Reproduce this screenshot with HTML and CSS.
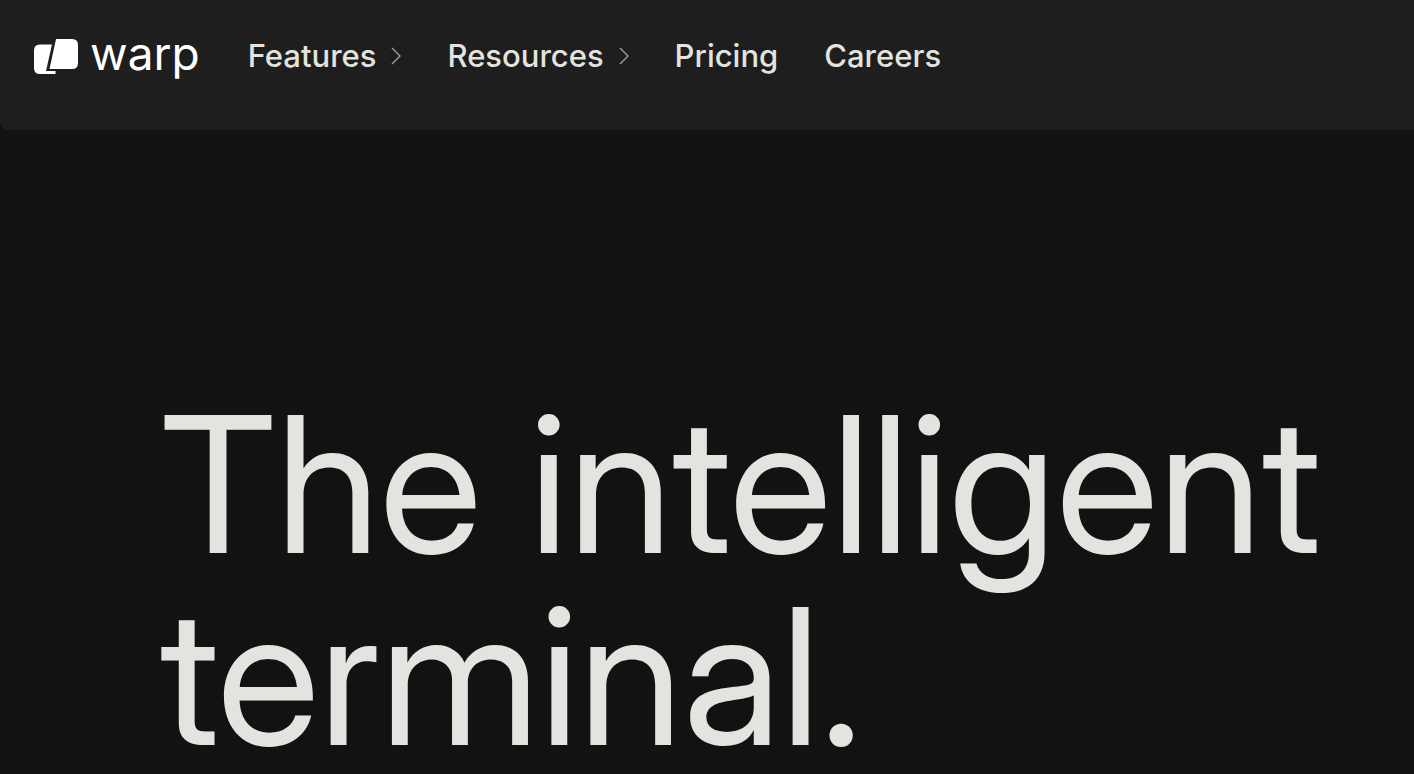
FILE: index.html
```html
<!DOCTYPE html>
<html lang="en">
<head>
<meta charset="utf-8">
<meta name="viewport" content="width=device-width, initial-scale=1">
<title>Warp: The intelligent terminal</title>
<link rel="stylesheet" href="styles.css">
</head>
<body>
<header class="header">
  <a class="logo" href="#">
    <svg class="logo-mark" viewBox="0 -1 44 36" aria-hidden="true">
      <path fill="#fff" d="M22 0H38Q44 0 44 6V24Q44 30 38 30H15.500Z"/>
      <path fill="#fff" d="M6 5.500H18L12 32H21.500V35H6Q0 35 0 29V11.500Q0 5.500 6 5.500Z"/>
    </svg>
    <span class="logo-name">warp</span>
  </a>
  <nav class="nav">
    <button class="nav-item" type="button">Features
      <svg class="chevron" viewBox="0 0 10 18" aria-hidden="true"><path d="M1 1L9 9L1 17"/></svg>
    </button>
    <button class="nav-item" type="button">Resources
      <svg class="chevron" viewBox="0 0 10 18" aria-hidden="true"><path d="M1 1L9 9L1 17"/></svg>
    </button>
    <a class="nav-item" href="#">Pricing</a>
    <a class="nav-item" href="#">Careers</a>
  </nav>
</header>
<main class="hero">
  <h1 class="title">The intelligent terminal.</h1>
</main>
</body>
</html>
```
FILE: styles.css
```css
* { box-sizing: border-box; }
body {
  margin: 0;
  background: #121212;
  color: #e3e4df;
  font-family: Inter, "Liberation Sans", sans-serif;
}
.header {
  display: flex;
  align-items: center;
  gap: 48px;
  padding: 32px 34px 50px;
  background: #1e1e1e;
  border-bottom-left-radius: 8px;
}
.logo {
  display: flex;
  align-items: center;
  gap: 12px;
  color: #fff;
  text-decoration: none;
}
.logo-mark { width: 44px; height: 36px; }
.logo-name { padding-bottom: 6px; font-size: 46px; line-height: 40px; }
.nav { display: flex; align-items: center; gap: 46px; }
.nav-item {
  display: flex;
  align-items: center;
  gap: 15px;
  padding: 0;
  border: 0;
  background: none;
  color: inherit;
  font: 500 31px/48px Inter, "Liberation Sans", sans-serif;
  text-decoration: none;
}
.chevron {
  width: 10px;
  height: 18px;
  fill: none;
  stroke: #969696;
  stroke-width: 1.500;
}
.hero { padding: 258px 64px 0 160px; }
.title {
  margin: 0;
  font-family: "Inter Display", Inter, "Liberation Sans", sans-serif;
  font-weight: 400;
  font-size: 190px;
  line-height: 192px;
}
```
